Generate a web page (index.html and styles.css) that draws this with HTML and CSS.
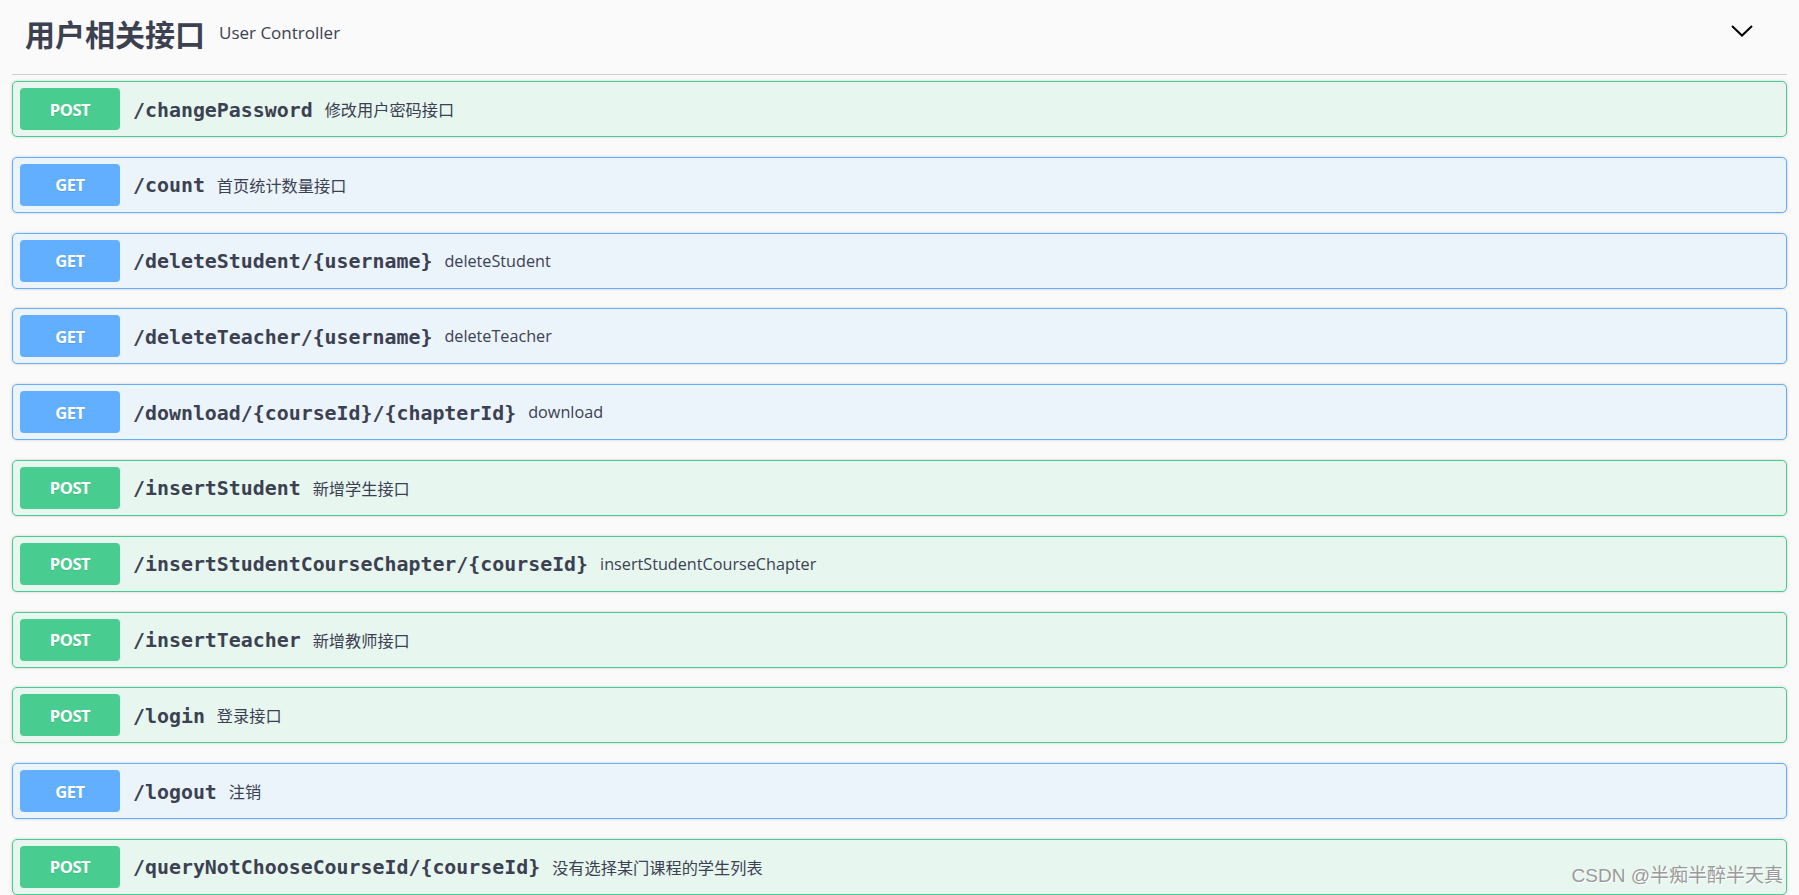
FILE: index.html
```html
<!DOCTYPE html>
<html lang="zh-CN">
<head>
<meta charset="utf-8">
<title>用户相关接口</title>
<link rel="stylesheet" href="styles.css">
</head>
<body>
<div class="page">
  <div class="tag-header">
    <h4 class="tag-title">用户相关接口</h4>
    <small class="tag-desc">User Controller</small>
    <span class="spacer"></span>
    <svg class="chevron" width="22" height="12" viewBox="0 0 22 12"><polyline points="1,1 11,10.5 21,1" fill="none" stroke="#000" stroke-width="2"/></svg>
  </div>
  <div class="ops">
    <div class="op post"><span class="method">POST</span><span class="path">/changePassword</span><span class="desc">修改用户密码接口</span></div>
    <div class="op get"><span class="method">GET</span><span class="path">/count</span><span class="desc">首页统计数量接口</span></div>
    <div class="op get"><span class="method">GET</span><span class="path">/deleteStudent/{username}</span><span class="desc">deleteStudent</span></div>
    <div class="op get"><span class="method">GET</span><span class="path">/deleteTeacher/{username}</span><span class="desc">deleteTeacher</span></div>
    <div class="op get"><span class="method">GET</span><span class="path">/download/{courseId}/{chapterId}</span><span class="desc">download</span></div>
    <div class="op post"><span class="method">POST</span><span class="path">/insertStudent</span><span class="desc">新增学生接口</span></div>
    <div class="op post"><span class="method">POST</span><span class="path">/insertStudentCourseChapter/{courseId}</span><span class="desc">insertStudentCourseChapter</span></div>
    <div class="op post"><span class="method">POST</span><span class="path">/insertTeacher</span><span class="desc">新增教师接口</span></div>
    <div class="op post"><span class="method">POST</span><span class="path">/login</span><span class="desc">登录接口</span></div>
    <div class="op get"><span class="method">GET</span><span class="path">/logout</span><span class="desc">注销</span></div>
    <div class="op post"><span class="method">POST</span><span class="path">/queryNotChooseCourseId/{courseId}</span><span class="desc">没有选择某门课程的学生列表</span></div>
  </div>
</div>
<div class="watermark">CSDN @半痴半醉半天真</div>
</body>
</html>
```
FILE: styles.css
```css
html, body {
  margin: 0;
  padding: 0;
  background: #fafafa;
  height: 100%;
  overflow: hidden;
}
body {
  font-family: "Open Sans", "Noto Sans CJK SC", sans-serif;
  color: #3b4151;
  position: relative;
}
.page {
  padding: 0 12px;
}
.tag-header {
  display: flex;
  align-items: center;
  height: 66px;
  padding: 0 34px 8px 13px;
  border-bottom: 1px solid #cfd0d3;
}
.tag-title {
  margin: 0;
  font-family: "Noto Sans CJK SC", sans-serif;
  font-weight: 700;
  font-size: 30px;
  line-height: 1;
  color: #3b4151;
}
.tag-desc {
  font-family: "Open Sans", sans-serif;
  font-size: 17px;
  margin-left: 14px;
  margin-top: -2px;
  color: #3b4151;
}
.spacer { flex: 1; }
.chevron {
  display: block;
  margin-top: -4px;
}
.ops {
  padding-top: 6px;
}
.op {
  display: flex;
  align-items: center;
  height: 54px;
  padding: 0 7px;
  border: 1px solid;
  border-radius: 5px;
  margin-bottom: 19.8px;
  box-shadow: 0 0 3px rgba(0,0,0,.19);
}
.op.post {
  background: #e8f6f0;
  border-color: #49cc90;
}
.op.get {
  background: #ebf3fb;
  border-color: #61affe;
}
.method {
  width: 100px;
  height: 42px;
  flex: none;
  display: flex;
  align-items: center;
  justify-content: center;
  border-radius: 4px;
  color: #fff;
  font-family: "Open Sans", sans-serif;
  font-weight: 700;
  font-size: 16.5px;
  letter-spacing: -0.4px;
  text-shadow: 0 1px 0 rgba(0,0,0,.1);
}
.post .method { background: #49cc90; }
.get .method { background: #61affe; }
.path {
  margin-left: 13px;
  padding-top: 2px;
  font-family: "DejaVu Sans Mono", monospace;
  font-weight: 700;
  font-size: 19.9px;
  color: #3b4151;
}
.desc {
  margin-left: 12px;
  font-family: "Open Sans", "Noto Sans CJK SC", sans-serif;
  font-size: 16.2px;
  color: #3b4151;
}
.watermark {
  position: absolute;
  right: 16px;
  top: 860px;
  font-family: "Liberation Sans", "Noto Sans CJK SC", sans-serif;
  font-size: 19px;
  color: #9a9a9a;
  text-shadow: 1px 1px 0 #fff;
}
```
